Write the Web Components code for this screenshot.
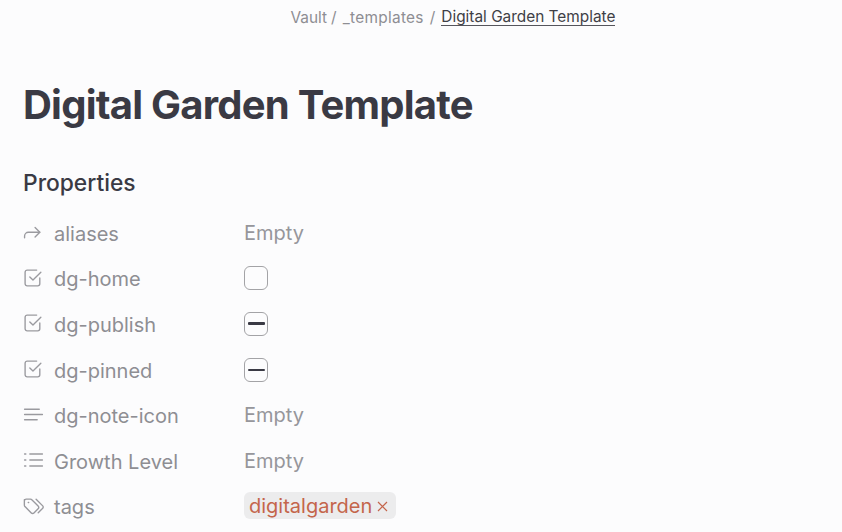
<!DOCTYPE html>
<html>
<head>
<meta charset="utf-8">
<style>
  html, body { margin: 0; height: 100%; overflow: hidden; background: #fcfcfd; }
  body { font-family: Inter, "Liberation Sans", sans-serif; }
</style>
</head>
<body>
<note-view>
  <note-breadcrumb slot="top"></note-breadcrumb>
  <h1-title slot="title">Digital Garden Template</h1-title>
  <prop-list slot="props">
    <prop-row icon="alias" name="aliases"><span class="x">Empty</span></prop-row>
    <prop-row icon="check" name="dg-home"><prop-check></prop-check></prop-row>
    <prop-row icon="check" name="dg-publish"><prop-check state="heavy"></prop-check></prop-row>
    <prop-row icon="check" name="dg-pinned"><prop-check state="light"></prop-check></prop-row>
    <prop-row icon="text" name="dg-note-icon"><span class="x">Empty</span></prop-row>
    <prop-row icon="list" name="Growth Level"><span class="x">Empty</span></prop-row>
    <prop-row icon="tags" name="tags"><tag-pill>digitalgarden</tag-pill></prop-row>
  </prop-list>
</note-view>
<script>
const ICONS = {
  alias: '<path d="M1.5 15v-1.6a3.6 3.6 0 0 1 3.6-3.6H16"/><path d="M11.5 5.3 16 9.8l-4.5 4.5"/>',
  check: '<path d="M16 9.5V15a2 2 0 0 1-2 2H4a2 2 0 0 1-2-2V4a2 2 0 0 1 2-2h9"/><path d="M6.5 8.5 9.5 11.5 17 4"/>',
  text: '<path d="M1.5 4h14M1.5 9h17M1.5 14h12"/>',
  list: '<path d="M6.5 3.8h12M6.5 9.5h12M6.5 15.2h12"/><path d="M1.5 3.8h1.2M1.5 9.5h1.2M1.5 15.2h1.2"/>',
  tags: '<path d="M1.3 3.6v5.2c0 .5.2 1 .6 1.3l6 6c.7.7 1.8.7 2.5 0l4-4c.7-.7.7-1.8 0-2.5l-6-6c-.3-.4-.8-.6-1.3-.6H3.2c-1 0-1.9.9-1.9 1.9z"/><path d="M12.5 3l6.3 6.4c.6.6.6 1.6 0 2.2L14.5 16"/><path d="M5 6.2h.4"/>'
};

class NoteView extends HTMLElement {
  constructor() {
    super();
    this.attachShadow({ mode: 'open' }).innerHTML = `
      <style>
        :host { display: flex; flex-direction: column; padding: 0 23px; color: #3a3a44; }
      </style>
      <slot name="top"></slot>
      <slot name="title"></slot>
      <slot name="props"></slot>`;
  }
}

class NoteBreadcrumb extends HTMLElement {
  constructor() {
    super();
    this.attachShadow({ mode: 'open' }).innerHTML = `
      <style>
        :host { display: flex; justify-content: center; gap: 6px; padding-top: 9px; font-size: 15.4px; line-height: 17px; color: #8e8e93; margin-left: 64px; }
        .first { margin-left: -2px; }
        .folder { letter-spacing: 0.3px; }
        .cur { color: #3f3f46; border-bottom: 1px solid #55555c; line-height: 16px; }
      </style>
      <span>Vault</span><span class="first">/</span><span class="folder">_templates</span><span>/</span><span class="cur">Digital Garden Template</span>`;
  }
}

class H1Title extends HTMLElement {
  constructor() {
    super();
    this.attachShadow({ mode: 'open' }).innerHTML = `
      <style>
        :host { display: block; margin-top: 54px; font-size: 40px; line-height: 50px; font-weight: 700; letter-spacing: -0.77px; color: #3a3a44; white-space: nowrap; }
      </style>
      <slot></slot>`;
  }
}

class PropList extends HTMLElement {
  constructor() {
    super();
    this.attachShadow({ mode: 'open' }).innerHTML = `
      <style>
        :host { display: block; margin-top: 39px; }
        h2 { margin: 0 0 14px; font-size: 22.8px; line-height: 27px; font-weight: 500; color: #3a3a44; }
        .rows { display: flex; flex-direction: column; }
      </style>
      <h2>Properties</h2>
      <div class="rows"><slot></slot></div>`;
  }
}

class PropRow extends HTMLElement {
  constructor() {
    super();
    const icon = ICONS[this.getAttribute('icon')];
    this.attachShadow({ mode: 'open' }).innerHTML = `
      <style>
        :host { display: grid; grid-template-columns: 31px 190px 1fr; align-items: center; height: 45.6px; font-size: 20px; color: #8e8e93; }
        svg { width: 21px; height: 21px; fill: none; stroke: #9a9a9f; stroke-width: 1.3; stroke-linecap: round; stroke-linejoin: round; }
        .name { padding-top: 2px; }
        ::slotted(.x) { color: #96969b; }
      </style>
      <svg viewBox="0 0 20 20">${icon}</svg>
      <span class="name">${this.getAttribute('name')}</span>
      <div><slot></slot></div>`;
  }
}

class PropCheck extends HTMLElement {
  constructor() {
    super();
    const state = this.getAttribute('state');
    const dash = state ? `<i class="${state}"></i>` : '';
    this.attachShadow({ mode: 'open' }).innerHTML = `
      <style>
        :host { display: flex; align-items: center; justify-content: center; box-sizing: border-box; width: 24px; height: 24px; border: 1.5px solid #a3a3a6; border-radius: 6px; }
        i { display: block; width: 17px; background: #3a3a44; border-radius: 1px; }
        .heavy { height: 3px; }
        .light { height: 2px; }
      </style>${dash}`;
  }
}

class TagPill extends HTMLElement {
  constructor() {
    super();
    this.attachShadow({ mode: 'open' }).innerHTML = `
      <style>
        :host { display: inline-flex; align-items: center; gap: 5px; box-sizing: border-box; height: 27px; margin-bottom: 2px; padding: 2px 8px 0 5px; background: #ececed; border-radius: 6px; color: #c4654b; font-size: 20px; }
        svg { width: 11px; height: 11px; stroke: #c4654b; stroke-width: 1.2; fill: none; }
      </style>
      <slot></slot>
      <svg viewBox="0 0 11 11"><path d="M1 1l9 9M10 1l-9 9"/></svg>`;
  }
}

customElements.define('note-view', NoteView);
customElements.define('note-breadcrumb', NoteBreadcrumb);
customElements.define('h1-title', H1Title);
customElements.define('prop-list', PropList);
customElements.define('prop-row', PropRow);
customElements.define('prop-check', PropCheck);
customElements.define('tag-pill', TagPill);
</script>
</body>
</html>
